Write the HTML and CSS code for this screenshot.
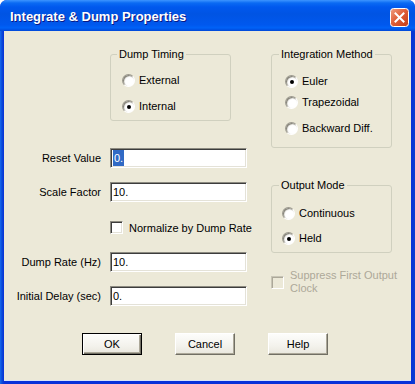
FILE: index.html
```html
<!DOCTYPE html>
<html lang="en">
<head>
  <meta charset="UTF-8">
  <title>Integrate &amp; Dump Properties</title>
  <link rel="stylesheet" href="styles.css">
</head>
<body>
  <div class="window">
    <div class="titlebar">
      <span class="title">Integrate &amp; Dump Properties</span>
      <span class="close">
        <svg width="19" height="19" viewBox="0 0 19 19">
          <defs>
            <linearGradient id="cg" x1="0" y1="0" x2="1" y2="1">
              <stop offset="0" stop-color="#f0a184"/>
              <stop offset="0.45" stop-color="#e0603a"/>
              <stop offset="1" stop-color="#c23a14"/>
            </linearGradient>
          </defs>
          <rect x="0.5" y="0.5" width="18" height="18" rx="3" fill="url(#cg)" stroke="#fff"/>
          <path d="M5.5 5.5 L13.5 13.5 M13.5 5.5 L5.5 13.5" stroke="#fff" stroke-width="2" stroke-linecap="square"/>
        </svg>
      </span>
    </div>

    <div class="frame">
      <div class="client">
        <div class="main">
          <div class="left">
            <div class="group timing">
              <div class="caption">Dump Timing</div>
              <div class="radio"><span class="dot"></span>External</div>
              <div class="radio on"><span class="dot"></span>Internal</div>
            </div>

            <div class="field reset">
              <span class="label">Reset Value</span>
              <div class="edit"><span class="sel">0.</span></div>
            </div>
            <div class="field scale">
              <span class="label">Scale Factor</span>
              <div class="edit">10.</div>
            </div>
            <div class="check normalize">
              <span class="box"></span>Normalize by Dump Rate
            </div>
            <div class="field rate">
              <span class="label">Dump Rate (Hz)</span>
              <div class="edit">10.</div>
            </div>
            <div class="field delay">
              <span class="label">Initial Delay (sec)</span>
              <div class="edit">0.</div>
            </div>
          </div>

          <div class="right">
            <div class="group method">
              <div class="caption">Integration Method</div>
              <div class="radio on"><span class="dot"></span>Euler</div>
              <div class="radio trap"><span class="dot"></span>Trapezoidal</div>
              <div class="radio back"><span class="dot"></span>Backward Diff.</div>
            </div>

            <div class="group output">
              <div class="caption">Output Mode</div>
              <div class="radio"><span class="dot"></span>Continuous</div>
              <div class="radio on"><span class="dot"></span>Held</div>
            </div>

            <div class="check disabled suppress">
              <span class="box"></span>
              <span class="text">Suppress First Output Clock</span>
            </div>
          </div>
        </div>

        <div class="buttons">
          <div class="btn default">OK</div>
          <div class="btn">Cancel</div>
          <div class="btn">Help</div>
        </div>
      </div>
    </div>
  </div>
</body>
</html>
```

FILE: styles.css
```css
html, body {
  margin: 0;
  padding: 0;
  background: #fff;
}

body {
  font-family: "Liberation Sans", Arial, sans-serif;
  font-size: 11px;
  color: #000;
}

.window {
  width: 415px;
  height: 384px;
  display: flex;
  flex-direction: column;
  background: #0831d9;
  border-radius: 7px 7px 0 0;
  overflow: hidden;
}

/* title bar */
.titlebar {
  height: 31px;
  flex: none;
  display: flex;
  align-items: center;
  justify-content: space-between;
  padding: 2px 6px 0 10px;
  box-sizing: border-box;
  background: linear-gradient(to bottom, #3d95ff 0, #0a6af3 3px, #0058ee 7px, #0054e3 45%, #0058ee 80%, #0062f7 90%, #0047d8 100%);
}

.title {
  color: #fff;
  font-size: 13px;
  font-weight: bold;
  text-shadow: 1px 1px #0a1883;
}

.close {
  display: block;
  width: 19px;
  height: 19px;
  margin-top: 1px;
}

.close svg {
  display: block;
}

/* blue frame round the client area */
.frame {
  flex: 1;
  padding: 0 4px 4px 4px;
  background: linear-gradient(to right, #166aee 0, #0a4ad8 2px, #0831d9 4px, #0831d9 calc(100% - 4px), #0a3fd0 100%);
}

.client {
  height: 349px;
  display: flex;
  flex-direction: column;
  background: #ece9d8;
  box-shadow: 0 1px #d8e4f8;
}

.main {
  display: flex;
}

.left {
  width: 267px;
}

.right {
  width: 140px;
}

/* group boxes */
.group {
  width: 121px;
  box-sizing: border-box;
  border: 1px solid #d0d0bf;
  border-radius: 3px;
}

.caption {
  display: table;
  margin: -7px 0 0 6px;
  padding: 0 2px;
  line-height: 13px;
  background: #ece9d8;
}

.timing {
  margin: 23px 0 0 106px;
  padding: 0 0 7px 11px;
}

.timing .caption {
  margin-left: -5px;
}

.timing .caption + .radio {
  margin-top: 13px;
}

.timing .radio + .radio {
  margin-top: 13px;
}

.method {
  margin-top: 23px;
  padding: 0 0 12px 13px;
}

.method .caption {
  margin-left: -6px;
}

.method .caption + .radio {
  margin-top: 14px;
}

.method .trap {
  margin-top: 8px;
}

.method .back {
  margin-top: 13px;
}

.output {
  margin-top: 37px;
  padding: 0 0 7px 10px;
}

.output .caption {
  margin-left: -3px;
}

.output .caption + .radio {
  margin-top: 15px;
}

.output .radio + .radio {
  margin-top: 12px;
}

/* radio buttons */
.radio {
  display: flex;
  align-items: center;
  height: 13px;
  line-height: 13px;
  gap: 4px;
}

.dot {
  width: 13px;
  height: 13px;
  box-sizing: border-box;
  border-radius: 50%;
  border: 1px solid;
  border-color: #9c9a8f #fff #fff #9c9a8f;
  background: radial-gradient(circle at 62% 62%, #fff 45%, #ebe9e0 75%, #cfccbd 100%);
  box-shadow: inset 1px 1px 1px #7e7c72;
  display: flex;
  align-items: center;
  justify-content: center;
  flex: none;
}

.radio.on .dot::after {
  content: "";
  width: 4px;
  height: 4px;
  border-radius: 50%;
  background: #000;
}

/* labelled edit boxes */
.field {
  display: flex;
  align-items: center;
  height: 20px;
}

.label {
  width: 97px;
  text-align: right;
  white-space: nowrap;
}

.edit {
  width: 137px;
  height: 20px;
  margin-left: 9px;
  box-sizing: border-box;
  padding: 0 0 0 2px;
  display: flex;
  align-items: center;
  background: #fff;
  border: 1px solid;
  border-color: #8c8a80 #fff #fff #8c8a80;
  box-shadow: inset 1px 1px #3c3c3c, inset -1px -1px #e4e2d8;
}

.sel {
  background: #316ac5;
  color: #fff;
  padding: 1px 1px;
  line-height: 14px;
}

.reset {
  margin-top: 27px;
}

.scale {
  margin-top: 14px;
}

.rate {
  margin-top: 18px;
}

.delay {
  margin-top: 14px;
}

/* check boxes */
.check {
  display: flex;
  align-items: center;
  gap: 6px;
}

.box {
  width: 13px;
  height: 13px;
  box-sizing: border-box;
  flex: none;
  background: #fff;
  border: 1px solid;
  border-color: #8c8a80 #fff #fff #8c8a80;
  box-shadow: inset 1px 1px #3c3c3c, inset -1px -1px #e4e2d8;
}

.normalize {
  height: 13px;
  margin: 19px 0 0 106px;
}

.suppress {
  margin-top: 16px;
  line-height: 13px;
}

.suppress .text {
  width: 112px;
}

.disabled {
  color: #aca899;
}

.disabled .box {
  background: #ece9d8;
  border-color: #c8c5b6 #fff #fff #c8c5b6;
  box-shadow: inset 1px 1px #aca899, inset -1px -1px #ece9d8;
}

/* push buttons */
.buttons {
  margin-top: auto;
  margin-bottom: 25px;
  padding-left: 78px;
  display: flex;
  gap: 33px;
}

.btn {
  width: 60px;
  height: 22px;
  box-sizing: border-box;
  display: flex;
  align-items: center;
  justify-content: center;
  background: linear-gradient(to bottom, #fdfdfb, #f3f2ec 60%, #e9e7dd);
  border: 1px solid;
  border-color: #fff #716f64 #716f64 #fff;
  box-shadow: inset -1px -1px #aca899;
}

.btn.default {
  border-color: #000;
  box-shadow: inset 1px 1px #fff, inset -1px -1px #716f64, inset -2px -2px #aca899;
}
```
